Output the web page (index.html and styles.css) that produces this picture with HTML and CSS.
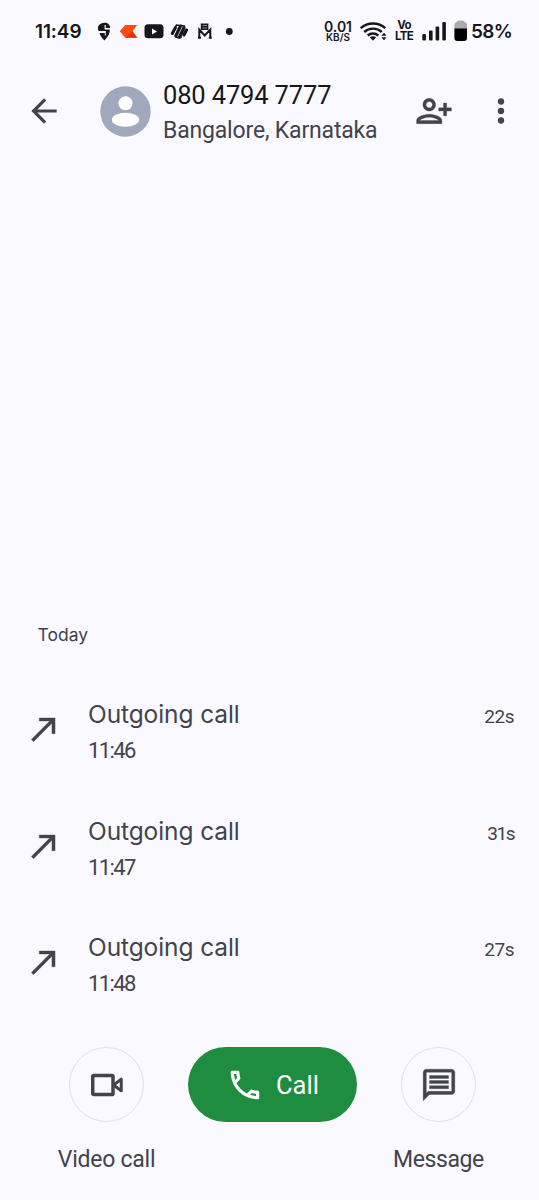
FILE: index.html
```html
<!DOCTYPE html>
<html lang="en">
<head>
<meta charset="utf-8">
<title>Call history</title>
<link rel="stylesheet" href="styles.css">
</head>
<body>
<div class="screen">
  <div class="status">
    <span class="clock">11:49</span>
    <svg class="notifications" width="142" height="24" viewBox="96 19 142 24">
      <path fill="#17171b" d="M104.500 22.800c3.600 0 5.700 2 5.500 5.200h-4.200v-3h-1.200v4.600h5.200c.5 3.400-1.600 7-5.300 10.900-2.500-2.300-4.400-5-5-7.500h5.300v2.500h1V31h-7c-2.600-4.200.9-8.200 5.700-8.200z"/>
      <path fill="#fb4c16" d="M119.700 31.300l5.500-6.300h12l-4.700 6.300 4.700 6.400h-12z"/>
      <path fill="#dc3517" d="M132.500 31.300l4.700 6.400h-12z"/>
      <rect x="144.500" y="24.300" width="19" height="14" rx="3.500" fill="#17171b"/>
      <path fill="#fff" d="M152 28.500v6l5-3z"/>
      <g fill="none" stroke="#17171b" stroke-width="3.100" stroke-linecap="round">
        <path d="M172.300 33.500l3.200-6M175.800 36l4.700-10M179.500 37l4.500-9.500M184 35l2.500-5"/>
        <path stroke-width="1.500" d="M175.500 26.500l1-1.500 3 .5M176 37l3 1 2.500-1M181 25.500l3.500.5"/>
      </g>
      <path fill="#17171b" d="M200.800 23.500h7.600v6.500h-7.600z"/>
      <path fill="none" stroke="#8b8b91" d="M202.500 25.500h4.500M202.500 28h4.500"/>
      <path fill="none" stroke="#17171b" stroke-width="2" d="M199.300 38V29.500l5.400 6 5.600-6V38M198 37.800h3M208.800 37.800h3"/>
      <circle cx="229.300" cy="31.500" r="3.400" fill="#17171b"/>
    </svg>
    <div class="stack speed"><span>0.01</span><small>KB/S</small></div>
    <svg class="wifi" width="28" height="24" viewBox="360 19 28 24">
      <g fill="none" stroke="#17171b" stroke-width="2.400">
        <path d="M360.700 28.200c7-6.300 17.600-6.300 24.600 0"/>
        <path d="M364.200 32c5-4.500 12.600-4.500 17.600 0"/>
        <path d="M367.700 35.500c3-2.700 7.600-2.700 10.600 0"/>
      </g>
      <path fill="#17171b" d="M369.800 37.300q3.200-2.200 6.400 0L373 40.700zM384 32.700l2.600 3h-5.200zM384 40.300l2.600-3h-5.200z"/>
    </svg>
    <div class="stack volte"><span>Vo</span><span>LTE</span></div>
    <svg class="signal" width="48" height="24" viewBox="421 19 48 24">
      <g fill="#17171b"><rect x="422.300" y="34" width="3.600" height="6.500" rx="1"/><rect x="429" y="30.500" width="3.600" height="10" rx="1"/><rect x="435.600" y="26.500" width="3.600" height="14" rx="1"/><rect x="442.300" y="22" width="3.600" height="18.500" rx="1"/></g>
      <path fill="#aaaaae" d="M457 22c0-1.500 1-1.500 3.700-1.500s3.700 0 3.700 1.500q2.600.3 2.600 3v4h-12.600v-4q0-2.700 2.600-3z"/>
      <path fill="#000" d="M454.400 28.500H467V38q0 3-3 3h-6.600q-3 0-3-3z"/>
    </svg>
    <span class="percent">58%</span>
  </div>

  <header class="header">
    <svg class="icon" viewBox="0 0 24 24"><path d="M20 11H7.830l5.590-5.590L12 4l-8 8 8 8 1.410-1.410L7.830 13H20v-2z"/></svg>
    <svg class="avatar" viewBox="0 0 51 51"><circle cx="25.500" cy="25.500" r="25.200" fill="#a0a9bb"/><circle cx="25.500" cy="17.200" r="7" fill="#fff"/><ellipse cx="25.500" cy="33.800" rx="13.600" ry="7" fill="#fff"/></svg>
    <div class="contact">
      <span class="number">080 4794 7777</span>
      <span class="place">Bangalore, Karnataka</span>
    </div>
    <svg class="icon heavy add" viewBox="0 0 24 24"><path d="M13 8c0-2.210-1.790-4-4-4S5 5.790 5 8s1.790 4 4 4 4-1.790 4-4zm-2 0c0 1.100-.9 2-2 2s-2-.9-2-2 .9-2 2-2 2 .9 2 2zM1 18v2h16v-2c0-2.660-5.330-4-8-4s-8 1.340-8 4zm2 0c.2-.71 3.300-2 6-2 2.690 0 5.780 1.280 6 2H3zm17-3v-3h3v-2h-3V7h-2v3h-3v2h3v3h2z"/></svg>
    <svg class="icon" viewBox="0 0 24 24"><circle cx="12" cy="6" r="2"/><circle cx="12" cy="12" r="2"/><circle cx="12" cy="18" r="2"/></svg>
  </header>

  <main class="history">
    <h2 class="day">Today</h2>
    <div class="call">
      <svg class="icon heavy" viewBox="0 0 24 24"><path d="M9 5v2h6.590L4 18.590 5.410 20 17 8.410V15h2V5z"/></svg>
      <div class="details"><span class="kind">Outgoing call</span><span class="time">11:46</span></div>
      <span class="duration">22s</span>
    </div>
    <div class="call">
      <svg class="icon heavy" viewBox="0 0 24 24"><path d="M9 5v2h6.590L4 18.590 5.410 20 17 8.410V15h2V5z"/></svg>
      <div class="details"><span class="kind">Outgoing call</span><span class="time">11:47</span></div>
      <span class="duration narrow">31s</span>
    </div>
    <div class="call">
      <svg class="icon heavy" viewBox="0 0 24 24"><path d="M9 5v2h6.590L4 18.590 5.410 20 17 8.410V15h2V5z"/></svg>
      <div class="details"><span class="kind">Outgoing call</span><span class="time">11:48</span></div>
      <span class="duration">27s</span>
    </div>
  </main>

  <footer class="actions">
    <div class="action">
      <span class="round"><svg class="icon" viewBox="0 0 24 24"><g fill="none" stroke="#43434a" stroke-width="2.200" stroke-linejoin="round"><rect x="3" y="6" width="12.800" height="12" rx=".7"/><path stroke-width="1.900" d="M16.200 12l4.800-3.700v7.400z"/></g></svg></span>
      <span class="label">Video call</span>
    </div>
    <div class="pill">
      <svg class="icon" viewBox="0 0 24 24"><path d="M6.540 5c.06.89.21 1.760.45 2.590l-1.200 1.200c-.41-1.200-.67-2.470-.76-3.790h1.510m9.860 12.020c.85.24 1.720.39 2.600.45v1.490c-1.320-.09-2.590-.35-3.800-.75l1.200-1.190M7.500 3H4c-.55 0-1 .45-1 1 0 9.390 7.610 17 17 17 .55 0 1-.45 1-1v-3.490c0-.55-.45-1-1-1-1.240 0-2.450-.2-3.570-.57-.1-.04-.21-.05-.31-.05-.26 0-.51.1-.71.29l-2.200 2.200c-2.830-1.450-5.150-3.760-6.590-6.590l2.200-2.200c.28-.28.36-.67.25-1.020C8.700 6.450 8.500 5.250 8.500 4c0-.55-.45-1-1-1z"/></svg>
      <span class="pill-label">Call</span>
    </div>
    <div class="action">
      <span class="round"><svg class="icon heavy" viewBox="0 0 24 24"><path d="M4 4h16v12H5.170L4 17.170V4m0-2c-1.100 0-1.990.9-1.990 2L2 22l4-4h14c1.100 0 2-.9 2-2V4c0-1.100-.9-2-2-2H4zm2 10.400h12v1.900H6zm0-3.200h12v1.900H6zm0-3.200h12v1.900H6z"/></svg></span>
      <span class="label message">Message</span>
    </div>
  </footer>
</div>
</body>
</html>
```

FILE: styles.css
```css
* { box-sizing: border-box; }
body { margin: 0; background: #f9f9ff; color: #43434a; font-family: Roboto, "Liberation Sans", sans-serif; }
svg { display: block; flex: none; }
span, small { white-space: nowrap; }
.screen { width: 539px; height: 1200px; display: flex; flex-direction: column; overflow: hidden; }

.status { height: 62px; padding-left: 35px; display: flex; align-items: center; color: #17171b; font-family: Inter, sans-serif; }
.clock { width: 61px; font-size: 19px; font-weight: 600; letter-spacing: -.1px; }
.stack { display: flex; flex-direction: column; align-items: center; font-weight: 600; }
.speed { width: 28px; margin-left: 86px; font-size: 14px; line-height: 12px; }
.speed small { font-size: 10px; line-height: 9px; }
.wifi { margin-left: 8px; }
.volte { width: 18px; margin-left: 7px; font-size: 11.500px; line-height: 11px; font-weight: 700; letter-spacing: -.7px; }
.signal { margin-left: 8px; }
.percent { margin-left: 2px; padding-top: 1px; font-size: 19px; font-weight: 600; letter-spacing: -.7px; }

.header { height: 98px; padding-left: 25px; display: flex; align-items: center; }
.icon { width: 38px; height: 38px; fill: #43434a; }
.heavy { stroke: #43434a; stroke-width: .2; }
.avatar { width: 51px; height: 51px; margin-left: 37px; }
.contact { width: 252px; margin-left: 12px; padding-top: 3px; display: flex; flex-direction: column; }
.number { font-size: 25.500px; line-height: 36px; letter-spacing: -.15px; color: #17171b; }
.place { font-size: 23px; line-height: 36px; letter-spacing: -.17px; }
.add { margin-right: 29px; }

.history { margin-top: 462px; }
.day { margin: 0 0 34px 37.500px; font: 400 17.500px/26px Inter, sans-serif; }
.call { height: 116.500px; padding: 12px 25px 0; display: flex; align-items: flex-start; }
.call .icon { margin-top: 16px; }
.details { flex: 1; margin-left: 25px; display: flex; flex-direction: column; margin-top: 2px; }
.kind { font: 400 24.500px/36px Inter, sans-serif; letter-spacing: -.1px; }
.time { margin-top: 1px; font-size: 22px; line-height: 36px; letter-spacing: -1.600px; }
.duration { margin-top: 5px; font-size: 19px; line-height: 36px; letter-spacing: -.5px; }
.narrow { letter-spacing: -1.500px; }

.actions { margin-top: 15.500px; padding: 0 40.500px 0 46.500px; display: flex; align-items: flex-start; justify-content: space-between; }
.action { width: 120px; display: flex; flex-direction: column; align-items: center; }
.round { width: 75px; height: 75px; border: 1px solid #dfdfe6; border-radius: 50%; display: flex; align-items: center; justify-content: center; }
.label { margin-top: 19.500px; font-size: 23px; line-height: 36px; letter-spacing: -.25px; }
.message { letter-spacing: -.4px; }
.pill { width: 169px; height: 75px; border-radius: 38px; background: #1f8d40; color: #fff; display: flex; align-items: center; padding-left: 38px; gap: 12px; }
.pill-label { font-size: 25.500px; }
.pill .icon { fill: #fff; }
```
